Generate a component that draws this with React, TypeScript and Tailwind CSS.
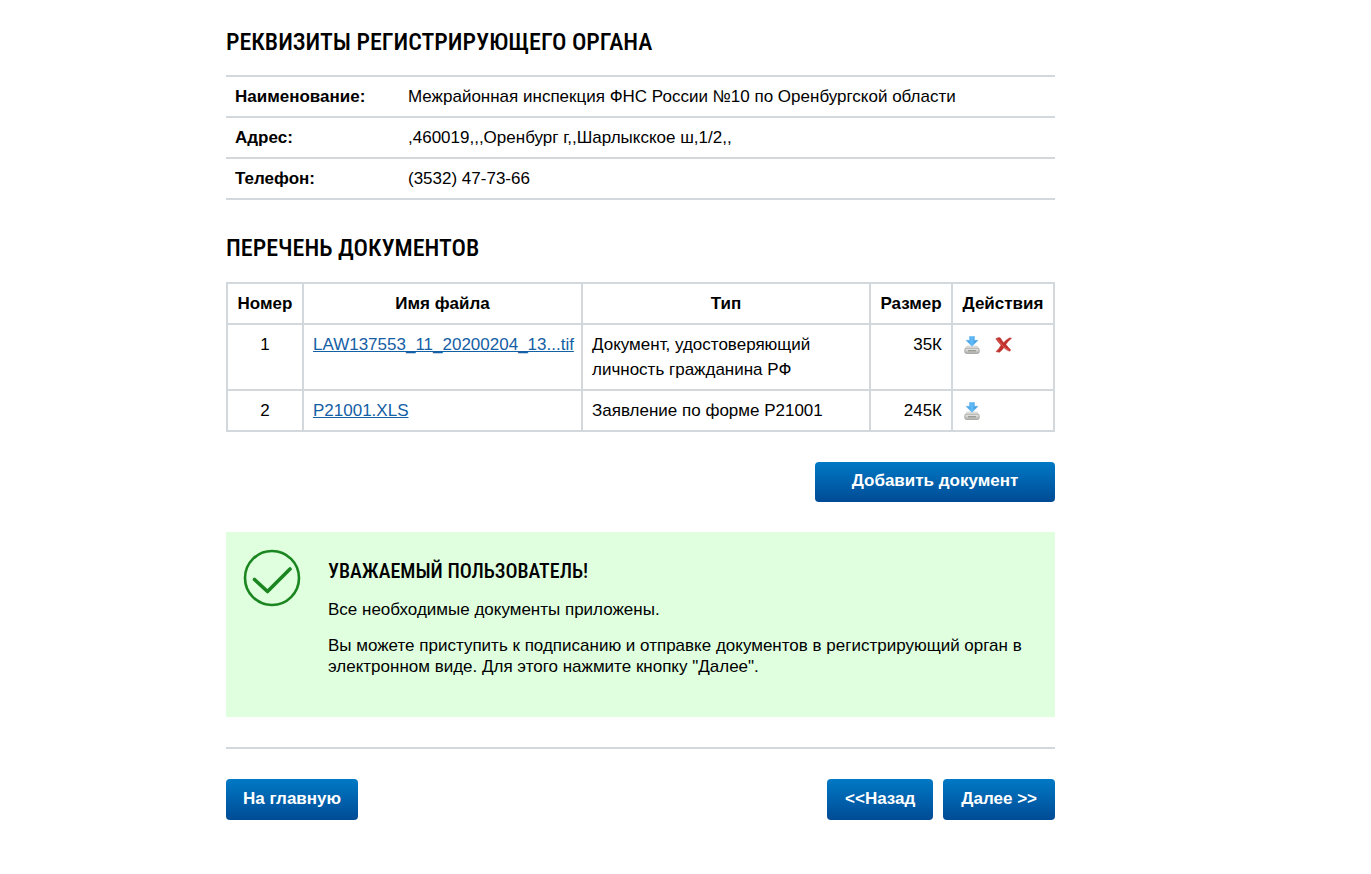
import type { ReactNode } from 'react'
import clsx from 'clsx'

interface DocumentFile {
  number: number
  name: string
  type: string
  size: string
  removable: boolean
}

const authority = [
  {
    label: 'Наименование:',
    value: 'Межрайонная инспекция ФНС России №10 по Оренбургской области',
  },
  { label: 'Адрес:', value: ',460019,,,Оренбург г,,Шарлыкское ш,1/2,,' },
  { label: 'Телефон:', value: '(3532) 47-73-66' },
]

const documents: DocumentFile[] = [
  {
    number: 1,
    name: 'LAW137553_11_20200204_13...tif',
    type: 'Документ, удостоверяющий личность гражданина РФ',
    size: '35К',
    removable: true,
  },
  {
    number: 2,
    name: 'P21001.XLS',
    type: 'Заявление по форме Р21001',
    size: '245К',
    removable: false,
  },
]

function DownloadIcon() {
  return (
    <svg width="16" height="18" viewBox="0 0 16 18" aria-hidden="true">
      <defs>
        <linearGradient id="arrow" x1="0" x2="1" y1="0" y2="0">
          <stop offset="0" stopColor="#2f93e0" />
          <stop offset="0.5" stopColor="#63bdf8" />
          <stop offset="1" stopColor="#2380d0" />
        </linearGradient>
        <linearGradient id="drive" x1="0" x2="0" y1="0" y2="1">
          <stop offset="0" stopColor="#ececea" />
          <stop offset="1" stopColor="#b0b0ae" />
        </linearGradient>
      </defs>
      <path d="M3 10h10l2 3H1z" fill="#e6e6e4" stroke="#c6c6c4" strokeWidth="0.5" />
      <rect x="0.8" y="12.2" width="14.4" height="5.2" rx="1.6" fill="url(#drive)" stroke="#999996" strokeWidth="0.8" />
      <path d="M4 14.8h8" stroke="#85857f" strokeWidth="1" />
      <path d="M5.4 .3h5.2v3.9h3.5L8 10.4 1.9 4.2h3.5z" fill="url(#arrow)" stroke="#7dbfee" strokeWidth="0.4" />
    </svg>
  )
}

function DeleteIcon() {
  return (
    <svg width="17" height="16" viewBox="0 0 17 16" aria-hidden="true">
      <path
        d="M.8 1.8 3.6.6 5.4.9C6.3 2.7 7.4 4.3 8.8 5.7 10.3 3.7 12.3 2 14.6.9L16.6 1.3C14.2 3.2 12.3 5.2 10.9 7.6 12.5 9.6 14.1 11.3 15.6 12.8L14.9 14.2C12.6 13.7 10.6 12.4 8.9 10.6 7.5 12.5 6 14.2 4.4 15.3L1 14.6C3 12.8 4.7 10.6 6 8.2 4.2 6.2 2.3 4.1.8 1.8z"
        fill="#c4302b"
        stroke="#b5332e"
        strokeWidth="0.5"
      />
      <path d="M2.6 2C5.6 7 9.5 11 13.8 13" fill="none" stroke="#dc6660" strokeWidth="0.9" />
    </svg>
  )
}

function SuccessIcon() {
  return (
    <svg width="58" height="58" viewBox="0 0 58 58" fill="none" stroke="#1b8520" aria-hidden="true">
      <circle cx="29" cy="29" r="27" strokeWidth="2.6" />
      <path d="M11.5 30.5 24.5 42.5 47 20" strokeWidth="3.6" strokeLinecap="round" strokeLinejoin="round" />
    </svg>
  )
}

function Button({ className, children }: { className?: string; children: ReactNode }) {
  return (
    <button
      type="button"
      className={clsx(
        'rounded bg-linear-to-b from-[#0079c5] to-[#004b95] text-[17px] leading-5 font-bold text-white',
        className,
      )}
    >
      {children}
    </button>
  )
}

function SectionTitle({ children }: { children: ReactNode }) {
  return (
    <h2 className="font-['Roboto_Condensed','Liberation_Sans',sans-serif] text-[24px] leading-8 font-medium uppercase">
      {children}
    </h2>
  )
}

export default function App() {
  return (
    <main className="bg-white pt-[26px] pr-[316px] pb-[54px] pl-[226px] font-['Liberation_Sans',Arial,sans-serif] text-[17px] leading-[25px] text-black">
      <SectionTitle>Реквизиты регистрирующего органа</SectionTitle>
      <table className="mt-[17px] w-full border-collapse">
        <tbody>
          {authority.map((row) => (
            <tr key={row.label} className="border-y-2 border-[#d3d8dc]">
              <th scope="row" className="w-[173px] px-[9px] py-[7px] text-left font-bold">
                {row.label}
              </th>
              <td className="px-[9px] py-[7px]">{row.value}</td>
            </tr>
          ))}
        </tbody>
      </table>

      <div className="mt-8">
        <SectionTitle>Перечень документов</SectionTitle>
      </div>
      <table className="mt-[18px] w-full table-fixed border-collapse [&_td]:border-2 [&_td]:border-[#d3d8dc] [&_td]:px-[9px] [&_td]:py-[7px] [&_td]:align-top [&_th]:border-2 [&_th]:border-[#d3d8dc] [&_th]:py-[7px]">
        <thead>
          <tr>
            <th scope="col" className="w-[76px]">Номер</th>
            <th scope="col" className="w-[279px]">Имя файла</th>
            <th scope="col">Тип</th>
            <th scope="col" className="w-[82px]">Размер</th>
            <th scope="col" className="w-[102px]">Действия</th>
          </tr>
        </thead>
        <tbody>
          {documents.map((doc) => (
            <tr key={doc.number}>
              <td className="text-center">{doc.number}</td>
              <td className="whitespace-nowrap">
                <a href="#" className="text-[#1460a5] underline">
                  {doc.name}
                </a>
              </td>
              <td>{doc.type}</td>
              <td className="text-right">{doc.size}</td>
              <td>
                <div className="flex h-[25px] items-center gap-[15px] pl-[2px]">
                  <button type="button" aria-label="Скачать">
                    <DownloadIcon />
                  </button>
                  {doc.removable && (
                    <button type="button" aria-label="Удалить">
                      <DeleteIcon />
                    </button>
                  )}
                </div>
              </td>
            </tr>
          ))}
        </tbody>
      </table>

      <div className="mt-[30px] flex justify-end">
        <Button className="w-[240px] pt-[9px] pb-[11px]">Добавить документ</Button>
      </div>

      <section className="mt-[30px] flex gap-[27px] bg-[#dfffdf] pt-[17px] pr-6 pb-10 pl-[17px]">
        <div className="shrink-0">
          <SuccessIcon />
        </div>
        <div className="pt-2 leading-[21px]">
          <h3 className="font-['Roboto_Condensed','Liberation_Sans',sans-serif] text-[20px] leading-7 font-medium uppercase">
            Уважаемый пользователь!
          </h3>
          <p className="mt-[14px]">Все необходимые документы приложены.</p>
          <p className="mt-[15px]">
            Вы можете приступить к подписанию и отправке документов в регистрирующий орган в
            электронном виде. Для этого нажмите кнопку "Далее".
          </p>
        </div>
      </section>

      <hr className="mt-[30px] border-t-2 border-[#d3d8dc]" />

      <div className="mt-[30px] flex gap-[10px]">
        <Button className="mr-auto px-[17px] pt-[10px] pb-[11px]">На главную</Button>
        <Button className="px-[18px] pt-[10px] pb-[11px]">&lt;&lt;Назад</Button>
        <Button className="px-[18px] pt-[10px] pb-[11px]">Далее &gt;&gt;</Button>
      </div>
    </main>
  )
}
